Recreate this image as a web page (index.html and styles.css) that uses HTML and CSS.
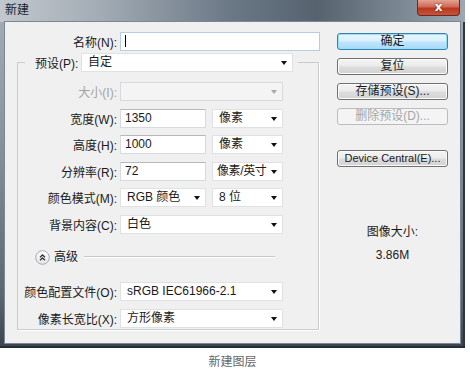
FILE: index.html
```html
<!DOCTYPE html>
<html lang="zh-CN">
<head>
    <meta charset="UTF-8">
    <meta name="viewport" content="width=device-width, initial-scale=1.0">
    <title>新建</title>
    <link rel="stylesheet" href="styles.css">
</head>
<body>
    <div class="window">
        <div class="titlebar">
            <span class="title">新建</span>
            <span class="close">x</span>
        </div>
        <div class="client">
            <div class="form">
                <div class="row name-row">
                    <label class="lbl lbl-top">名称(N):</label>
                    <div class="field text-input focused w-name"><span class="caret"></span></div>
                </div>
                <fieldset class="group">
                    <legend class="preset">
                        <span class="preset-lbl">预设(P):</span>
                        <div class="field select w-preset">自定<i class="arrow"></i></div>
                    </legend>
                    <div class="row disabled">
                        <label class="lbl">大小(I):</label>
                        <div class="field select w-long"><i class="arrow"></i></div>
                    </div>
                    <div class="row">
                        <label class="lbl">宽度(W):</label>
                        <div class="field text-input w-short">1350</div>
                        <div class="field select w-unit">像素<i class="arrow"></i></div>
                    </div>
                    <div class="row">
                        <label class="lbl">高度(H):</label>
                        <div class="field text-input w-short">1000</div>
                        <div class="field select w-unit">像素<i class="arrow"></i></div>
                    </div>
                    <div class="row">
                        <label class="lbl">分辨率(R):</label>
                        <div class="field text-input w-short">72</div>
                        <div class="field select w-unit tight">像素/英寸<i class="arrow"></i></div>
                    </div>
                    <div class="row">
                        <label class="lbl">颜色模式(M):</label>
                        <div class="field select w-short">RGB 颜色<i class="arrow"></i></div>
                        <div class="field select w-unit">8 位<i class="arrow"></i></div>
                    </div>
                    <div class="row">
                        <label class="lbl">背景内容(C):</label>
                        <div class="field select w-long">白色<i class="arrow"></i></div>
                    </div>
                    <div class="advanced">
                        <svg class="adv-icon" width="15" height="15" viewBox="0 0 15 15">
                            <defs>
                                <linearGradient id="advFill" x1="0" y1="0" x2="0" y2="1">
                                    <stop offset="0" stop-color="#ffffff"/>
                                    <stop offset="1" stop-color="#e2e4e7"/>
                                </linearGradient>
                            </defs>
                            <circle cx="7.5" cy="7.5" r="6.8" fill="url(#advFill)" stroke="#a3a9b0" stroke-width="1"/>
                            <path d="M5 7.2 L7.5 4.9 L10 7.2 M5 10.2 L7.5 7.9 L10 10.2" fill="none" stroke="#333" stroke-width="1.3"/>
                        </svg>
                        <span class="adv-text">高级</span>
                        <span class="adv-line"></span>
                    </div>
                    <div class="row profile-row">
                        <label class="lbl">颜色配置文件(O):</label>
                        <div class="field select w-long">sRGB IEC61966-2.1<i class="arrow"></i></div>
                    </div>
                    <div class="row">
                        <label class="lbl">像素长宽比(X):</label>
                        <div class="field select w-long">方形像素<i class="arrow"></i></div>
                    </div>
                </fieldset>
            </div>
            <div class="side">
                <div class="btn default">确定</div>
                <div class="btn">复位</div>
                <div class="btn">存储预设(S)...</div>
                <div class="btn disabled-btn">删除预设(D)...</div>
                <div class="btn device">Device Central(E)...</div>
                <div class="size-title">图像大小:</div>
                <div class="size-value">3.86M</div>
            </div>
        </div>
    </div>
    <div class="caption">新建图层</div>
</body>
</html>
```

FILE: styles.css
```css
* {
    margin: 0;
    padding: 0;
    box-sizing: border-box;
}
body {
    font-family: 'Liberation Sans', 'Noto Sans CJK SC', sans-serif;
    font-size: 12px;
    color: #1a1a1a;
    background: #fff;
}
.window {
    width: 465px;
    height: 348px;
    padding: 0 5px 5px 5px;
    background: linear-gradient(180deg, #a4afba 0%, #8893a0 40%, #5b6673 85%, #3a444f 100%);
    box-shadow: inset 0 -2px 0 #252d36, inset -2px 0 0 #2c3540;
}
.titlebar {
    height: 22px;
    margin: 0 -5px;
    padding: 0 5px;
    display: flex;
    justify-content: space-between;
    align-items: flex-start;
    background: linear-gradient(90deg, #c2c8ce 0%, #a2abb4 22%, #6a7785 50%, #56636f 68%, #7f8b97 88%, #9ea8b2 100%);
}
.title {
    margin-top: 3px;
    font-size: 12px;
    line-height: 15px;
    color: #1c232b;
}
.close {
    width: 43px;
    height: 16px;
    border: 1px solid #6b2a20;
    border-top: none;
    border-radius: 0 0 4px 4px;
    background: linear-gradient(180deg, #e3a394 0%, #cf6a55 45%, #b8371f 55%, #c8533c 100%);
    color: #fff;
    font-family: 'DejaVu Sans', sans-serif;
    font-weight: bold;
    font-size: 12px;
    line-height: 14px;
    text-align: center;
    text-shadow: 0 0 2px #5a1409;
}
.client {
    height: 321px;
    display: flex;
    background: #f0f0f0;
    box-shadow: 0 0 0 1px #7b8794;
}
.form {
    width: 320px;
}
.row {
    display: flex;
    align-items: center;
    height: 19px;
}
.row + .row {
    margin-top: 7.5px;
}
.name-row {
    margin-top: 10px;
}
.lbl {
    width: 99px;
    margin-right: 3px;
    text-align: right;
    white-space: nowrap;
}
.lbl-top {
    width: 112px;
}
.field {
    position: relative;
    height: 19px;
    line-height: 17px;
    background: #fff;
    border: 1px solid #dfe1e5;
    white-space: nowrap;
}
.text-input {
    padding-left: 4px;
    border-color: #d6dbe1;
    border-top-color: #b4b9c0;
}
.focused {
    border-color: #b6cde4;
}
.caret {
    display: inline-block;
    width: 1px;
    height: 12px;
    margin-top: 2px;
    background: #000;
}
.select {
    padding-left: 6px;
}
.tight {
    padding-left: 4px;
    letter-spacing: -0.4px;
}
.arrow {
    position: absolute;
    right: 5px;
    top: 7px;
    width: 0;
    height: 0;
    border-left: 3.5px solid transparent;
    border-right: 3.5px solid transparent;
    border-top: 4px solid #111;
}
.w-name {
    width: 200px;
}
.w-preset {
    width: 212px;
}
.w-long {
    width: 163px;
}
.w-short {
    width: 86px;
    margin-right: 6px;
}
.w-unit {
    width: 71px;
}
.disabled .lbl {
    color: #a3a3a3;
}
.disabled .field {
    background: #f4f4f4;
    border-color: #d9d9d9;
}
.disabled .arrow {
    border-top-color: #a8a8a8;
}
.group {
    width: 302px;
    height: 277px;
    margin: 2px 0 0 12px;
    padding: 10px 0 0 0;
    border: 1px solid #c7ccd1;
    box-shadow: 1px 1px 0 #fff;
}
.preset {
    display: flex;
    align-items: center;
    margin-left: 7px;
    padding: 0 5px 0 10px;
}
.preset-lbl {
    width: 43px;
    margin-right: 3px;
    white-space: nowrap;
}
.advanced {
    display: flex;
    align-items: center;
    height: 16px;
    margin: 15.5px 43px 0 17px;
}
.adv-icon {
    display: block;
}
.adv-text {
    margin-left: 4px;
    line-height: 16px;
}
.adv-line {
    flex: 1;
    height: 2px;
    margin-left: 6px;
    border-top: 1px solid #c4c8cc;
    border-bottom: 1px solid #fff;
}
.advanced + .row {
    margin-top: 17px;
}
.side {
    width: 111px;
    margin-left: 12px;
    padding-top: 11px;
    text-align: center;
}
.btn {
    height: 17px;
    line-height: 15px;
    border: 1px solid #707070;
    border-radius: 3px;
    background: linear-gradient(180deg, #f4f4f4 0%, #ebebeb 48%, #dddddd 52%, #d3d3d3 100%);
    box-shadow: inset 0 0 0 1px #fcfcfc;
    text-align: center;
    white-space: nowrap;
}
.btn + .btn {
    margin-top: 8px;
}
.default {
    border-color: #3c7fb1;
    background: linear-gradient(180deg, #eaf6fd 0%, #d9f0fc 48%, #bee6fd 52%, #a7d9f5 100%);
    box-shadow: inset 0 0 0 1px #8fe0f8;
}
.disabled-btn {
    color: #a6a6a6;
    border-color: #bcbcbc;
    background: #f4f4f4;
    box-shadow: none;
}
.btn.device {
    margin-top: 25px;
    font-size: 11px;
}
.size-title {
    margin-top: 57px;
    line-height: 16px;
}
.size-value {
    margin-top: 7px;
    line-height: 16px;
}
.caption {
    width: 465px;
    margin-top: 7px;
    line-height: 14px;
    text-align: center;
    color: #666;
}
```
